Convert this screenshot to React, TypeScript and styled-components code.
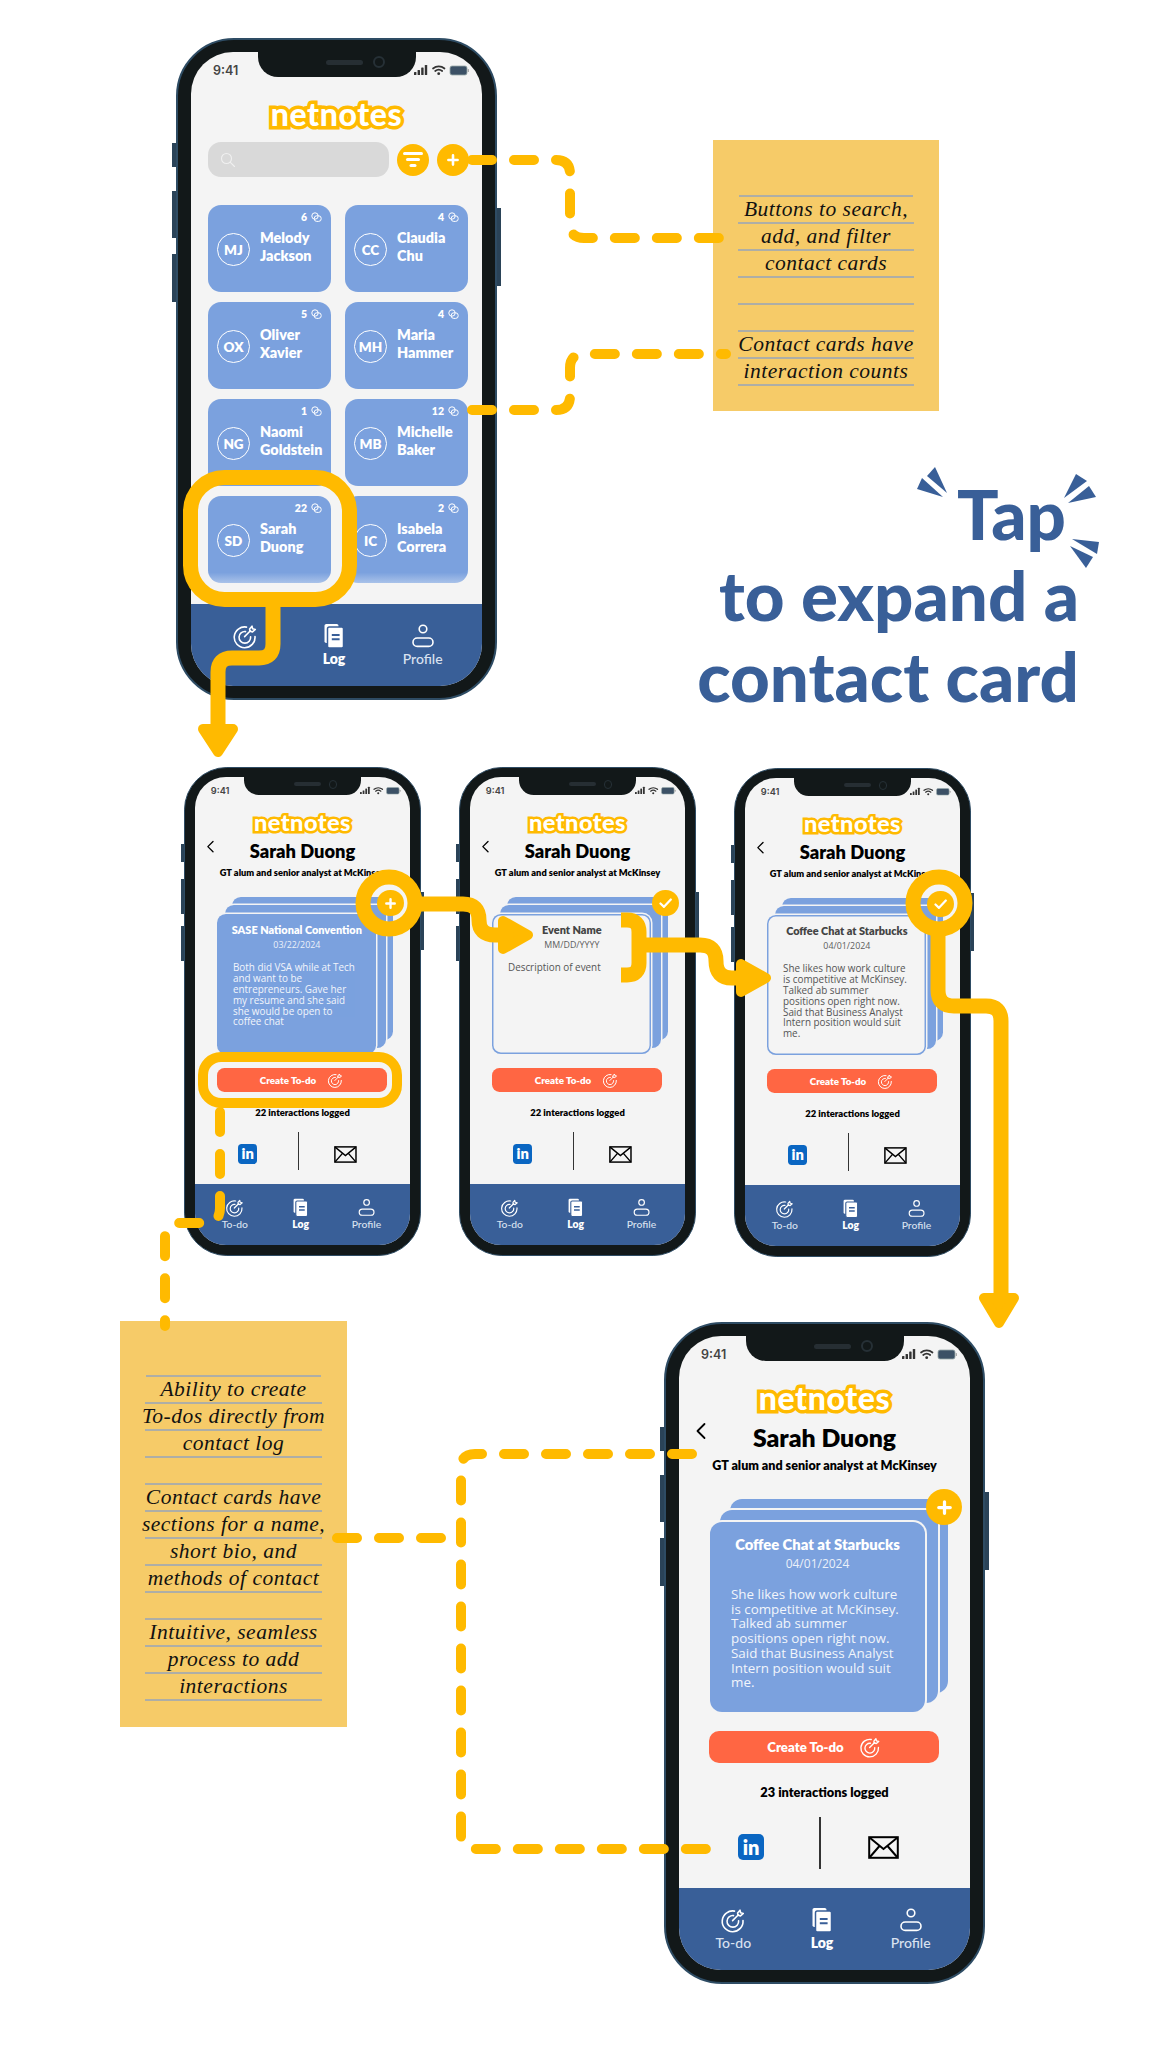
import React from "react";
import styled, { createGlobalStyle } from "styled-components";

const YELLOW = "#FFBA00";
const BLUE = "#7BA1DE";
const NAVY = "#395F98";
const UI_FONT = `Lato, "Noto Sans", sans-serif`;
const BODY_FONT = `"Open Sans", "Noto Sans", sans-serif`;
const HAND_FONT = `"Liberation Serif", serif`;

const Global = createGlobalStyle`
  html, body { margin: 0; padding: 0; background: #fff; }
  * { box-sizing: border-box; }
`;

const Canvas = styled.div`
  position: relative;
  width: 1154px;
  height: 2048px;
  overflow: hidden;
  background: #fff;
  font-family: ${UI_FONT};
`;

const Slot = styled.div<{ $x: number; $y: number }>`
  position: absolute;
  left: ${(p) => p.$x}px;
  top: ${(p) => p.$y}px;
`;

/* ---------- phone shell ---------- */
const Frame = styled.div<{ $scale: number }>`
  zoom: ${(p) => p.$scale};
  position: relative;
  width: 321px;
  height: 662px;
  padding: 12px 13px;
  border: 2px solid #2e4c64;
  border-radius: 58px;
  background: #121819;
`;

const SideKey = styled.span<{ $side: "left" | "right"; $top: number; $h: number }>`
  position: absolute;
  ${(p) => p.$side}: -6px;
  top: ${(p) => p.$top}px;
  width: 4px;
  height: ${(p) => p.$h}px;
  background: #2a4358;
`;

const Screen = styled.div`
  position: relative;
  display: flex;
  flex-direction: column;
  height: 634px;
  overflow: hidden;
  border-radius: 42px;
  background: #f4f4f4;
`;

const Notch = styled.div`
  position: absolute;
  top: 0;
  left: 67px;
  width: 158px;
  height: 25px;
  border-radius: 0 0 20px 20px;
  background: #121819;
  display: flex;
  align-items: center;
  justify-content: center;
  gap: 10px;
  padding: 0 0 5px 36px;
`;
const Speaker = styled.span`
  width: 37px;
  height: 5px;
  border-radius: 3px;
  background: #262e33;
`;
const Camera = styled.span`
  width: 12px;
  height: 12px;
  border-radius: 50%;
  background: #121819;
  border: 2px solid #263036;
`;

const StatusBar = styled.div`
  height: 40px;
  flex: none;
  padding: 0 12px 3px 22px;
  display: flex;
  align-items: center;
  justify-content: space-between;
  font: 600 12.5px Inter, sans-serif;
  color: #444;
`;

const Logo = styled.div`
  height: 46px;
  flex: none;
  padding-bottom: 4px;
  display: flex;
  align-items: center;
  justify-content: center;
  font: 900 32px ${UI_FONT};
  letter-spacing: 0.6px;
  color: #fff;
  -webkit-text-stroke: 7px ${YELLOW};
  paint-order: stroke fill;
`;

const StatusIcons = () => (
  <svg width="56" height="13" viewBox="0 0 56 13" aria-hidden>
    <g fill="#333">
      <rect x="0" y="8" width="2.4" height="3" rx=".6" />
      <rect x="3.6" y="6" width="2.4" height="5" rx=".6" />
      <rect x="7.2" y="3.5" width="2.4" height="7.5" rx=".6" />
      <rect x="10.8" y="1" width="2.4" height="10" rx=".6" />
    </g>
    <path d="M19 4.5a9 9 0 0 1 11.5 0M21.2 7a5.6 5.6 0 0 1 7 0" fill="none" stroke="#333" strokeWidth="1.7" strokeLinecap="round" />
    <circle cx="24.7" cy="9.7" r="1.4" fill="#333" />
    <rect x="36" y="2" width="17" height="9" rx="2" fill="#3c5166" stroke="#9aa" strokeWidth=".8" />
    <rect x="53.6" y="5" width="1.4" height="3" rx=".6" fill="#aaa" />
  </svg>
);

/* ---------- icons ---------- */
const TargetIcon = ({ size = 26 }: { size?: number }) => (
  <svg width={size} height={size} viewBox="0 0 26 26" fill="none" stroke="#fff" strokeWidth="1.6" strokeLinecap="round" strokeLinejoin="round" aria-hidden>
    <path d="M14.5 4.1A10.4 10.4 0 1 0 23 13.5" />
    <path d="M13.5 8.6A5.8 5.8 0 1 0 18.6 13.8" />
    <path d="M12.6 13.6 18.4 7.8" />
    <path d="M17.6 6 20 3.2l.6 2.6 2.7.7-2.8 2.4-2.6-.6z" />
  </svg>
);
const LogIcon = () => (
  <svg width="26" height="26" viewBox="0 0 26 26" aria-hidden>
    <rect x="3.5" y="1" width="14" height="19" rx="1.8" fill="#fff" />
    <rect x="6.5" y="4" width="16" height="21" rx="1.8" fill="#fff" stroke={NAVY} strokeWidth="1.5" />
    <path d="M10.8 12h7.8M10.8 16.2h7.8" stroke={NAVY} strokeWidth="2" />
  </svg>
);
const ProfileIcon = () => (
  <svg width="26" height="26" viewBox="0 0 26 26" fill="none" stroke="#fff" strokeWidth="1.6" aria-hidden>
    <circle cx="13" cy="6" r="3.8" />
    <rect x="3" y="15" width="20" height="8.4" rx="4.2" />
  </svg>
);
const BubbleIcon = () => (
  <svg width="11" height="11" viewBox="0 0 11 11" fill="none" stroke="#fff" strokeWidth="1" aria-hidden>
    <circle cx="4" cy="4" r="3.2" />
    <rect x="3.2" y="3.8" width="7" height="5.6" rx="2.6" />
  </svg>
);
const FilterIcon = () => (
  <svg width="20" height="16" viewBox="0 0 20 16" fill="#fff" aria-hidden>
    <rect x="0" y="0" width="20" height="3" rx="1.5" />
    <rect x="3" y="6" width="14" height="3" rx="1.5" />
    <rect x="6.5" y="12" width="7" height="3" rx="1.5" />
  </svg>
);
const PlusIcon = ({ size = 12 }: { size?: number }) => (
  <svg width={size} height={size} viewBox="0 0 12 12" stroke="#fff" strokeWidth="2.6" strokeLinecap="round" aria-hidden>
    <path d="M6 1.4v9.2M1.4 6h9.2" />
  </svg>
);
const CheckIcon = () => (
  <svg width="18" height="14" viewBox="0 0 18 14" fill="none" stroke="#fff" strokeWidth="3" strokeLinecap="round" strokeLinejoin="round" aria-hidden>
    <path d="M2 7.5 6.8 12 16 2" />
  </svg>
);
const SearchIcon = () => (
  <svg width="16" height="16" viewBox="0 0 16 16" fill="none" stroke="#f0f0f0" strokeWidth="1.1" strokeLinecap="round" aria-hidden>
    <circle cx="6.5" cy="6.5" r="5" />
    <path d="M10.3 10.3 14.5 14.5" />
  </svg>
);
const MailIcon = () => (
  <svg width="31" height="23" viewBox="0 0 31 23" fill="none" stroke="#000" strokeWidth="2" aria-hidden>
    <rect x="1.2" y="1.2" width="28.6" height="20.6" />
    <path d="M1.5 1.5 15.5 13 29.5 1.5M1.5 21.5 11.5 10M29.5 21.5 19.5 10" />
  </svg>
);
const BackIcon = () => (
  <svg width="12" height="18" viewBox="0 0 12 18" fill="none" stroke="#000" strokeWidth="1.8" strokeLinecap="round" strokeLinejoin="round" aria-hidden>
    <path d="M9.5 2 2.5 9l7 7" />
  </svg>
);

/* ---------- tab bar ---------- */
const TabBar = styled.nav`
  margin-top: auto;
  flex: none;
  height: 82px;
  padding: 19px 15px 0 10px;
  display: grid;
  grid-template-columns: repeat(3, 1fr);
  background: ${NAVY};
`;
const Tab = styled.div<{ $active?: boolean }>`
  display: flex;
  flex-direction: column;
  align-items: center;
  gap: 1px;
  font: ${(p) => (p.$active ? 800 : 500)} 14px/18px ${UI_FONT};
  color: ${(p) => (p.$active ? "#fff" : "#d9e2f0")};
`;
const Tabs = () => (
  <TabBar>
    <Tab><TargetIcon /><span>To-do</span></Tab>
    <Tab $active><LogIcon /><span>Log</span></Tab>
    <Tab><ProfileIcon /><span>Profile</span></Tab>
  </TabBar>
);

/* ---------- contacts list ---------- */
const SearchRow = styled.div`
  margin: 4px 0 28px 17px;
  display: flex;
  align-items: center;
  gap: 8px;
`;
const SearchField = styled.div`
  width: 181px;
  height: 35px;
  padding-left: 12px;
  display: flex;
  align-items: center;
  border-radius: 13px;
  background: #d9d9d9;
`;
const RoundButton = styled.div`
  width: 32px;
  height: 32px;
  flex: none;
  display: flex;
  align-items: center;
  justify-content: center;
  border-radius: 50%;
  background: ${YELLOW};
`;
const ContactGrid = styled.div`
  margin-left: 17px;
  display: grid;
  grid-template-columns: 123px 123px;
  grid-auto-rows: 87px;
  gap: 10px 14px;
`;
const ContactCard = styled.div<{ $fade?: boolean }>`
  padding: 6px 9px 0;
  border-radius: 13px;
  color: #fff;
  background: ${(p) =>
    p.$fade ? `linear-gradient(${BLUE} 88%, #a9c2e9 100%)` : BLUE};
`;
const CountRow = styled.div`
  display: flex;
  justify-content: flex-end;
  align-items: center;
  gap: 4px;
  font: 800 10.5px/12px ${UI_FONT};
`;
const ContactBody = styled.div`
  margin-top: 6px;
  display: flex;
  gap: 10px;
`;
const Avatar = styled.div`
  width: 33px;
  height: 33px;
  margin-top: 4px;
  flex: none;
  display: flex;
  align-items: center;
  justify-content: center;
  border: 1.5px solid #fff;
  border-radius: 50%;
  font: 800 13.5px ${UI_FONT};
`;
const ContactName = styled.div`
  font: 800 14.4px/18px ${UI_FONT};
  white-space: pre-line;
`;

const contacts = [
  { i: "MJ", n: "Melody\nJackson", c: 6 },
  { i: "CC", n: "Claudia\nChu", c: 4 },
  { i: "OX", n: "Oliver\nXavier", c: 5 },
  { i: "MH", n: "Maria\nHammer", c: 4 },
  { i: "NG", n: "Naomi\nGoldstein", c: 1 },
  { i: "MB", n: "Michelle\nBaker", c: 12 },
  { i: "SD", n: "Sarah\nDuong", c: 22 },
  { i: "IC", n: "Isabela\nCorrera", c: 2 },
];

const ContactsPhone = () => (
  <Shell>
    <SearchRow>
      <SearchField><SearchIcon /></SearchField>
      <RoundButton><FilterIcon /></RoundButton>
      <RoundButton><PlusIcon /></RoundButton>
    </SearchRow>
    <ContactGrid>
      {contacts.map((c, idx) => (
        <ContactCard key={c.i} $fade={idx > 5}>
          <CountRow><span>{c.c}</span><BubbleIcon /></CountRow>
          <ContactBody>
            <Avatar>{c.i}</Avatar>
            <ContactName>{c.n}</ContactName>
          </ContactBody>
        </ContactCard>
      ))}
    </ContactGrid>
  </Shell>
);

/* ---------- detail screen ---------- */
const TitleRow = styled.div`
  position: relative;
  height: 32px;
  flex: none;
  text-align: center;
  font: 800 24.8px/32px ${UI_FONT};
  color: #000;
`;
const BackSlot = styled.span`
  position: absolute;
  left: 16px;
  top: 0;
  line-height: 0;
`;
const Subtitle = styled.div`
  height: 24px;
  flex: none;
  text-align: center;
  white-space: nowrap;
  font: 800 12.55px/24px ${UI_FONT};
  color: #000;
`;
const Stack = styled.div`
  position: relative;
  margin: 21px 0 0 31px;
  width: 238px;
  height: 213px;
  flex: none;
`;
const PaperBack = styled.div<{ $left: number; $top: number; $w: number; $h: number }>`
  position: absolute;
  left: ${(p) => p.$left}px;
  top: ${(p) => p.$top}px;
  width: ${(p) => p.$w}px;
  height: ${(p) => p.$h}px;
  border-radius: 12px;
  background: ${BLUE};
  box-shadow: 0 0 0 2px #f4f4f4;
`;
const PaperFront = styled.div<{ $outlined?: boolean }>`
  position: absolute;
  left: 0;
  top: 23px;
  width: 215px;
  height: 190px;
  padding: 11px 21px 0;
  border-radius: 12px;
  color: ${(p) => (p.$outlined ? "#444" : "#fff")};
  background: ${(p) => (p.$outlined ? "#f4f4f4" : BLUE)};
  box-shadow: ${(p) =>
    p.$outlined ? `inset 0 0 0 2px ${BLUE}, 0 0 0 2px #f4f4f4` : "0 0 0 2px #f4f4f4"};
`;
const EventTitle = styled.div`
  margin: 0 -20px;
  text-align: center;
  white-space: nowrap;
  font: 800 14.8px/22px ${UI_FONT};
`;
const EventDate = styled.div`
  text-align: center;
  font: 400 12px/18px ${BODY_FONT};
  opacity: 0.85;
`;
const EventText = styled.div`
  margin-top: 14px;
  white-space: pre-line;
  font: 400 13.4px/14.7px ${BODY_FONT};
  opacity: 0.9;
`;
const CornerButton = styled(RoundButton)`
  position: absolute;
  left: 216px;
  top: -10px;
  width: 36px;
  height: 36px;
`;
const CreateButton = styled.div`
  margin: 19px 0 0 30px;
  width: 230px;
  height: 32px;
  flex: none;
  display: flex;
  align-items: center;
  justify-content: center;
  gap: 15px;
  border-radius: 10px;
  background: #ff6643;
  color: #fff;
  font: 800 13.2px ${UI_FONT};
`;
const Logged = styled.div`
  margin-top: 19px;
  height: 20px;
  flex: none;
  text-align: center;
  font: 800 12.8px/20px ${UI_FONT};
  color: #000;
`;
const ContactMethods = styled.div`
  margin-top: 15px;
  height: 52px;
  flex: none;
  display: grid;
  grid-template-columns: 140px 2px 1fr;
  align-items: center;
  justify-items: center;
`;
const Divider = styled.span`
  width: 2px;
  height: 52px;
  background: #333;
`;
const LinkedIn = styled.div`
  width: 26px;
  height: 26px;
  margin: 8px 0 0 4px;
  display: flex;
  align-items: center;
  justify-content: center;
  border-radius: 5px;
  background: #0a66c2;
  color: #fff;
  font: 800 20px/26px ${UI_FONT};
`;
const MailSlot = styled.div`
  margin: 8px 25px 0 0;
  line-height: 0;
`;

type DetailProps = {
  title: string;
  date: string;
  text: string;
  logged: number;
  outlined?: boolean;
  done?: boolean;
};

const DetailPhone = ({ title, date, text, logged, outlined, done }: DetailProps) => (
  <Shell>
    <TitleRow>
      <BackSlot><BackIcon /></BackSlot>
      Sarah Duong
    </TitleRow>
    <Subtitle>GT alum and senior analyst at McKinsey</Subtitle>
    <Stack>
      <PaperBack $left={20} $top={0} $w={218} $h={194} />
      <PaperBack $left={10} $top={11} $w={218} $h={193} />
      <PaperFront $outlined={outlined}>
        <EventTitle>{title}</EventTitle>
        <EventDate>{date}</EventDate>
        <EventText>{text}</EventText>
      </PaperFront>
      <CornerButton>{done ? <CheckIcon /> : <PlusIcon size={15} />}</CornerButton>
    </Stack>
    <CreateButton>
      <span>Create To-do</span>
      <TargetIcon size={22} />
    </CreateButton>
    <Logged>{logged} interactions logged</Logged>
    <ContactMethods>
      <LinkedIn>in</LinkedIn>
      <Divider />
      <MailSlot><MailIcon /></MailSlot>
    </ContactMethods>
  </Shell>
);

const Shell = ({ children }: { children: React.ReactNode }) => (
  <Screen>
    <Notch><Speaker /><Camera /></Notch>
    <StatusBar><span>9:41</span><StatusIcons /></StatusBar>
    <Logo>netnotes</Logo>
    {children}
    <Tabs />
  </Screen>
);

const Phone = ({ x, y, scale = 1, children }: { x: number; y: number; scale?: number; children: React.ReactNode }) => (
  <Slot $x={x} $y={y}>
    <Frame $scale={scale}>
      <SideKey $side="left" $top={103} $h={24} />
      <SideKey $side="left" $top={151} $h={47} />
      <SideKey $side="left" $top={214} $h={48} />
      <SideKey $side="right" $top={168} $h={78} />
      {children}
    </Frame>
  </Slot>
);

/* ---------- sticky notes ---------- */
const Note = styled.div<{ $w: number; $h: number; $pad: number }>`
  width: ${(p) => p.$w}px;
  height: ${(p) => p.$h}px;
  padding: ${(p) => p.$pad}px 26px 0;
  background: #f6cb68;
`;
const NoteLines = styled.div`
  border-top: 2px solid #aeaea6;
`;
const NoteRow = styled.div`
  height: 27px;
  border-bottom: 2px solid #aeaea6;
  margin: 0 -16px;
  border-image: linear-gradient(to right, transparent 16px, #aeaea6 16px, #aeaea6 calc(100% - 16px), transparent calc(100% - 16px)) 1;
  text-align: center;
  white-space: nowrap;
  font: italic 400 21.5px/25px ${HAND_FONT};
  letter-spacing: 0.5px;
  color: #111;
`;
const StickyNote = ({ x, y, w, h, pad, rows }: { x: number; y: number; w: number; h: number; pad: number; rows: string[] }) => (
  <Slot $x={x} $y={y}>
    <Note $w={w} $h={h} $pad={pad}>
      <NoteLines>
        {rows.map((r, i) => (
          <NoteRow key={i}>{r}</NoteRow>
        ))}
      </NoteLines>
    </Note>
  </Slot>
);

/* ---------- headline ---------- */
const Headline = styled.div`
  color: ${NAVY};
  font: 900 69px/81px ${UI_FONT};
  text-align: right;
  width: 420px;
`;
const TapLine = styled.div`
  padding-right: 13px;
`;

/* ---------- connector overlay ---------- */
const Overlay = styled.svg`
  position: absolute;
  inset: 0;
  pointer-events: none;
`;

const dash = { fill: "none", stroke: YELLOW, strokeWidth: 10, strokeLinecap: "round" as const, strokeDasharray: "20 22" };
const solid = { fill: "none", stroke: YELLOW, strokeWidth: 15 };
const head = { fill: YELLOW, stroke: YELLOW, strokeWidth: 10, strokeLinejoin: "round" as const };

const Connectors = () => (
  <Overlay width="1154" height="2048" viewBox="0 0 1154 2048">
    {/* dashed callouts */}
    <path {...dash} d="M472 160H556Q570 160 570 174V224Q570 238 584 238H728" />
    <path {...dash} d="M472 410H556Q570 410 570 396V368Q570 354 584 354H726" />
    <path {...dash} d="M220 1112V1208Q220 1223 205 1223H179Q165 1223 165 1237V1326" />
    <path {...dash} d="M337 1538H461" />
    <path {...dash} d="M692 1454H475Q461 1454 461 1468V1835Q461 1849 475 1849H716" />

    {/* ring around Sarah's card and arrow down */}
    <rect {...solid} x="190.5" y="477.5" width="159" height="122" rx="34" />
    <path {...solid} d="M273 600V644Q273 658 259 658H232Q218 658 218 672V730" />
    <path {...head} d="M203 729H233L218 752Z" />

    {/* first detail phone */}
    <circle {...solid} cx="389" cy="903" r="26" />
    <path {...solid} d="M421 904H463Q479 904 479 920Q479 935 495 935H506" />
    <path {...head} d="M503 921V949L528 935Z" />
    <rect fill="none" stroke={YELLOW} strokeWidth="10" x="203" y="1057" width="194" height="46" rx="18" />

    {/* second detail phone */}
    <path {...solid} d="M621 920H627Q639 920 639 932V963Q639 975 627 975H621" />
    <path {...solid} d="M640 945H700Q716 945 716 961Q716 978 732 978H745" />
    <path {...head} d="M741 964V992L766 978Z" />

    {/* third detail phone */}
    <circle {...solid} cx="939" cy="903" r="26" />
    <path {...solid} d="M938 934V990Q938 1006 954 1006H986Q1001 1006 1001 1021V1296" />
    <path {...head} d="M984 1298H1014L999 1323Z" />

    {/* tap burst */}
    <g fill={NAVY}>
      <path d="M935 467 927 476 947 493Z" />
      <path d="M922 478 917 489 943 497Z" />
      <path d="M1076 474 1087 481 1064 498Z" />
      <path d="M1089 486 1096 497 1068 503Z" />
      <path d="M1072 539 1099 542 1097 554Z" />
      <path d="M1070 546 1093 557 1086 568Z" />
    </g>
  </Overlay>
);

const SMALL = 237 / 321;

const STARBUCKS_TEXT =
  "She likes how work culture\nis competitive at McKinsey.\nTalked ab summer\npositions open right now.\nSaid that Business Analyst\nIntern position would suit\nme.";

export default function App() {
  return (
    <Canvas>
      <Global />
      <Phone x={176} y={38}><ContactsPhone /></Phone>
      <Phone x={184} y={767} scale={SMALL}>
        <DetailPhone
          title="SASE National Convention"
          date="03/22/2024"
          text={"Both did VSA while at Tech\nand want to be\nentrepreneurs. Gave her\nmy resume and she said\nshe would be open to\ncoffee chat"}
          logged={22}
        />
      </Phone>
      <Phone x={459} y={767} scale={SMALL}>
        <DetailPhone title="Event Name" date="MM/DD/YYYY" text="Description of event" logged={22} outlined done />
      </Phone>
      <Phone x={734} y={768} scale={SMALL}>
        <DetailPhone title="Coffee Chat at Starbucks" date="04/01/2024" text={STARBUCKS_TEXT} logged={22} outlined done />
      </Phone>
      <Phone x={664} y={1322}>
        <DetailPhone title="Coffee Chat at Starbucks" date="04/01/2024" text={STARBUCKS_TEXT} logged={23} />
      </Phone>

      <StickyNote
        x={713} y={140} w={226} h={271} pad={55}
        rows={["Buttons to search,", "add, and filter", "contact cards", "", "", "Contact cards have", "interaction counts"]}
      />
      <StickyNote
        x={120} y={1321} w={227} h={406} pad={54}
        rows={[
          "Ability to create", "To-dos directly from", "contact log", "",
          "Contact cards have", "sections for a name,", "short bio, and", "methods of contact", "",
          "Intuitive, seamless", "process to add", "interactions",
        ]}
      />

      <Slot $x={659} $y={473}>
        <Headline>
          <TapLine>Tap</TapLine>
          <div>to expand a</div>
          <div>contact card</div>
        </Headline>
      </Slot>

      <Connectors />
    </Canvas>
  );
}
